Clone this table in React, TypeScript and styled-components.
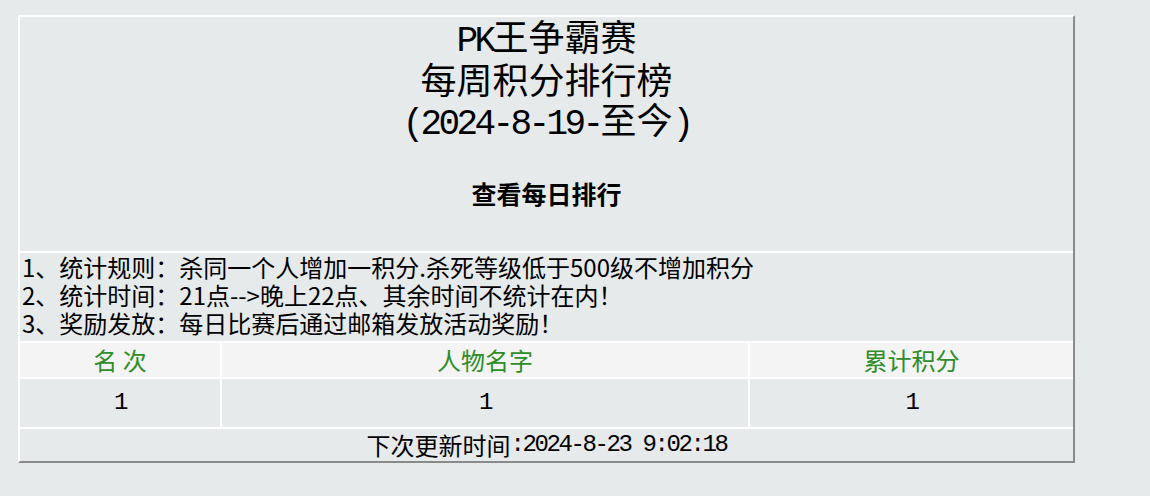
import React from "react";
import styled, { createGlobalStyle } from "styled-components";

const GlobalStyle = createGlobalStyle`
  html, body {
    margin: 0;
    padding: 0;
    background: #e6eaeb;
  }
  body {
    font-family: "Noto Sans CJK SC", sans-serif;
    color: #000;
  }
`;

const Page = styled.div`
  padding: 15px 0 0 18px;
  width: 1150px;
  height: 496px;
  box-sizing: border-box;
`;

const Board = styled.div`
  width: 1057px;
  box-sizing: border-box;
  border-top: 2px solid #ffffff;
  border-left: 2px solid #ffffff;
  border-right: 2px solid #8a8a8a;
  border-bottom: 2px solid #8a8a8a;
  background: #ffffff;
  display: flex;
  flex-direction: column;
  gap: 2px;
`;

/* Half-width Latin run, like the SimSun latin glyphs of the original */
const Latin = styled.span`
  font-family: "Liberation Mono", monospace;
  letter-spacing: -0.1em;
  line-height: 0;
`;

const TitleCell = styled.div`
  background: #e6eaeb;
  height: 234px;
  display: flex;
  flex-direction: column;
  align-items: center;
  box-sizing: border-box;
`;

const TitleLine = styled.div<{ $lift?: number }>`
  font-size: 36px;
  line-height: ${(p) => 38 - (p.$lift ?? 0) * 2}px;
  height: 42px;
  white-space: nowrap;
`;

const DailyLink = styled.div`
  margin-top: 36px;
  font-size: 25px;
  line-height: 28px;
  height: 30px;
  font-weight: 700;
`;

const RulesCell = styled.div`
  background: #e6eaeb;
  height: 88px;
  padding-left: 2px;
  box-sizing: border-box;
  font-size: 24px;
  line-height: 28px;
`;

const RuleLine = styled.div`
  white-space: nowrap;
  height: 28px;
`;

const Row = styled.div<{ $height: number }>`
  display: grid;
  grid-template-columns: 200px 526px 323px;
  column-gap: 2px;
  height: ${(p) => p.$height}px;
`;

const Cell = styled.div<{ $head?: boolean }>`
  background: ${(p) => (p.$head ? "#f4f4f4" : "#e6eaeb")};
  color: ${(p) => (p.$head ? "#2e8d28" : "#000")};
  display: flex;
  align-items: center;
  justify-content: center;
  font-size: 24px;
  line-height: 28px;
  white-space: pre;
`;

const FooterCell = styled.div`
  background: #e6eaeb;
  height: 32px;
  display: flex;
  align-items: center;
  justify-content: center;
  font-size: 24px;
  line-height: 28px;
  white-space: pre;
`;

export default function App() {
  return (
    <>
      <GlobalStyle />
      <Page>
        <Board>
          <TitleCell>
            <TitleLine $lift={1}>
              <Latin>PK</Latin>王争霸赛
            </TitleLine>
            <TitleLine>每周积分排行榜</TitleLine>
            <TitleLine $lift={2}>
              <Latin>(2024-8-19-</Latin>至今<Latin>)</Latin>
            </TitleLine>
            <DailyLink>查看每日排行</DailyLink>
          </TitleCell>
          <RulesCell>
            <RuleLine>1、统计规则：杀同一个人增加一积分.杀死等级低于500级不增加积分</RuleLine>
            <RuleLine>2、统计时间：21点--&gt;晚上22点、其余时间不统计在内！</RuleLine>
            <RuleLine>3、奖励发放：每日比赛后通过邮箱发放活动奖励！</RuleLine>
          </RulesCell>
          <Row $height={34}>
            <Cell $head>名 次</Cell>
            <Cell $head>人物名字</Cell>
            <Cell $head>累计积分</Cell>
          </Row>
          <Row $height={48}>
            <Cell>
              <Latin>1</Latin>
            </Cell>
            <Cell>
              <Latin>1</Latin>
            </Cell>
            <Cell>
              <Latin>1</Latin>
            </Cell>
          </Row>
          <FooterCell>
            下次更新时间<Latin>:2024-8-23 9:02:18</Latin>
          </FooterCell>
        </Board>
      </Page>
    </>
  );
}
